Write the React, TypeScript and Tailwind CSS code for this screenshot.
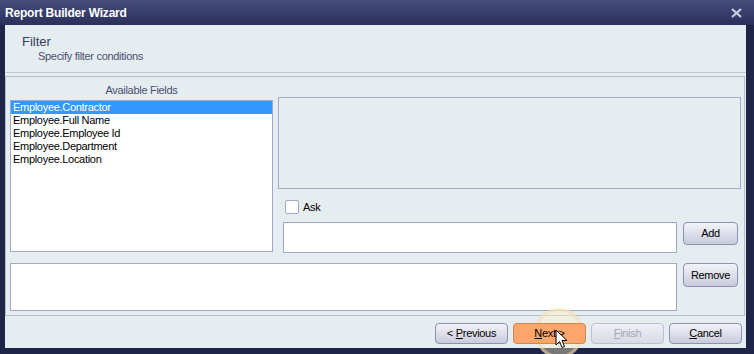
import React from "react";

const font = { fontFamily: '"Liberation Sans", Arial, sans-serif' };

// plain wizard button, size classes passed in
const WizButton = ({
  children,
  size = "h-[21px] w-[73px]",
  className = "",
}: {
  children: React.ReactNode;
  size?: string;
  className?: string;
}) => (
  <button
    className={`flex shrink-0 items-center justify-center rounded-[4px] border border-[#8e90b8] bg-gradient-to-b from-[#f2f3f8] to-[#c9cbdd] text-[11px] tracking-[-0.3px] text-black ${size} ${className}`}
  >
    <span>{children}</span>
  </button>
);

export default function App() {
  const fields = [
    "Employee.Contractor",
    "Employee.Full Name",
    "Employee.Employee Id",
    "Employee.Department",
    "Employee.Location",
  ];

  return (
    <div
      className="flex h-[354px] w-[754px] flex-col bg-[#1f2549] text-[11px] tracking-[-0.3px]"
      style={font}
    >
      {/* Title bar */}
      <div className="flex h-[25px] shrink-0 items-center justify-between bg-gradient-to-b from-[#474e7e] to-[#2a3059] pl-[5px] pr-[12px]">
        <span className="text-[12px] font-bold tracking-[-0.2px] text-white">Report Builder Wizard</span>
        <svg width="11" height="10" viewBox="0 0 11 10">
          <path d="M1 1 L10 9 M10 1 L1 9" stroke="#c9cde0" strokeWidth="2.2" />
        </svg>
      </div>

      {/* Body */}
      <div className="ml-[5px] mr-[8px] flex flex-1 flex-col bg-[#e6edf0]">
        {/* Header */}
        <div className="h-[48px] shrink-0 border-b border-[#c3c7d6] pl-[17px] pt-[9px]">
          <div className="text-[13px] leading-[15px] tracking-[0px] text-[#363e62]">Filter</div>
          <div className="pl-[16px] pt-[1px] leading-[13px] text-[#4a5070]">Specify filter conditions</div>
        </div>

        {/* Main panel */}
        <div className="mt-[3px] mr-[1px] h-[240px] shrink-0 border border-[#b7bacd] bg-[#e6edf0] pl-[4px] pr-[3px]">
          <div className="flex">
            <div className="flex w-[263px] shrink-0 flex-col">
              <div className="flex h-[23px] items-center justify-center pt-[3px] text-[#4a4e70]">
                Available Fields
              </div>
              <div className="h-[152px] border border-[#a3a6cb] bg-white">
                {fields.map((f, i) => (
                  <div
                    key={f}
                    className={`h-[13px] pl-[2px] leading-[13px] ${i === 0 ? "bg-[#3399ff] text-white" : "text-black"}`}
                  >
                    {f}
                  </div>
                ))}
              </div>
            </div>

            <div className="ml-[5px] flex min-w-0 flex-1 flex-col">
              <div className="mt-[20px] h-[92px] border border-[#a7a9c9] bg-[#e6edf0]" />
              <div className="mt-[11px] flex h-[14px] items-center pl-[7px]">
                <div className="h-[14px] w-[14px] rounded-[2px] border border-[#a3a6cb] bg-white" />
                <span className="ml-[4px] text-black">Ask</span>
              </div>
              <div className="mt-[8px] flex items-start pl-[5px]">
                <div className="h-[31px] w-[394px] shrink-0 border border-[#a3a6cb] bg-white" />
                <WizButton size="h-[23px] w-[55px]" className="ml-[6px]">
                  Add
                </WizButton>
              </div>
            </div>
          </div>

          <div className="mt-[10px] flex items-start">
            <div className="h-[48px] w-[667px] shrink-0 border border-[#a3a6cb] bg-white" />
            <WizButton size="h-[24px] w-[55px]" className="ml-[6px]">
              Remove
            </WizButton>
          </div>
        </div>

        {/* Footer */}
        <div className="flex flex-1 items-start justify-end gap-[5px] pr-[4px] pt-[7px]">
          <WizButton>
            {"< "}
            <span className="underline">P</span>revious
          </WizButton>
          <div className="relative">
            <div className="pointer-events-none absolute left-[22px] top-[-15px] h-[50px] w-[48px] rounded-full border-[3px] border-[#f6d9a8]/50 bg-[#fff6c4]/40" />
            <button className="relative flex h-[21px] w-[73px] items-center justify-center rounded-[4px] border border-[#cf864f] bg-[#fda66c] text-[11px] tracking-[-0.3px] text-black">
              <span>
                <span className="underline">N</span>ext &gt;
              </span>
            </button>
            <svg
              className="pointer-events-none absolute left-[42px] top-[6px]"
              width="14"
              height="21"
              viewBox="0 0 14 21"
            >
              <path
                d="M1 1 L1 16 L4.5 12.5 L7 18.5 L9.5 17.5 L7 11.5 L12 11.5 Z"
                fill="white"
                stroke="black"
                strokeWidth="1"
                strokeLinejoin="round"
              />
            </svg>
          </div>
          <button className="flex h-[21px] w-[73px] items-center justify-center rounded-[4px] border border-[#bcbed4] bg-gradient-to-b from-[#eef0f5] to-[#d8dae6] text-[11px] tracking-[-0.3px] text-[#a4a7b8]">
            <span>
              <span className="underline">F</span>inish
            </span>
          </button>
          <WizButton>
            <span className="underline">C</span>ancel
          </WizButton>
        </div>
      </div>
      <div className="h-[6px] shrink-0" />
    </div>
  );
}
